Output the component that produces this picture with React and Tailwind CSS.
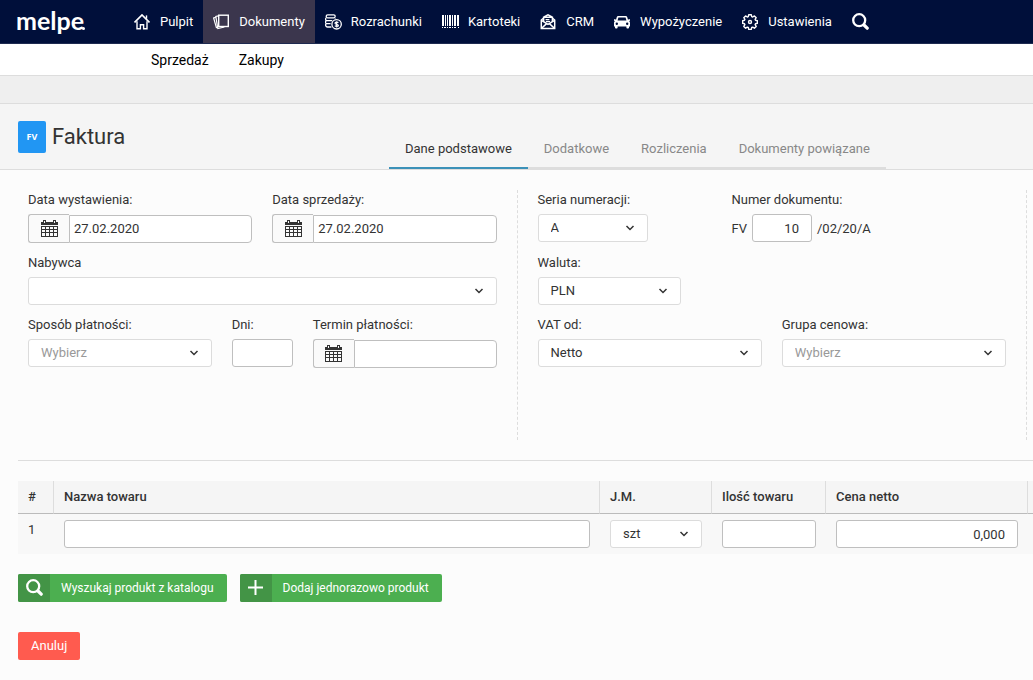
import { useState } from "react";

const HomeIcon = () => (
  <svg width="16" height="16" viewBox="0 0 16 16" fill="none" stroke="currentColor" strokeWidth="1.4" aria-hidden="true">
    <path d="M.5 8.4 8 1l7.5 7.400" strokeWidth="1.700" />
    <path d="M3 7.200v7.600h3.400v-4h3.200v4H13V7.200" />
    <path d="M12.500 1.400v3.400" />
  </svg>
);

const DocsIcon = () => (
  <svg width="16" height="16" viewBox="0 0 16 16" fill="none" stroke="currentColor" aria-hidden="true">
    <rect x="5.700" y="1.200" width="9.600" height="11.300" strokeWidth="1.400" />
    <path d="M5.400 1.800 2.800 2.400l2 12.200 6.600-1.600" strokeWidth="1.200" />
    <path d="M2.800 3.400.6 4l2.800 9.600 1.400-.2" strokeWidth="1.200" />
  </svg>
);

const CoinsIcon = () => (
  <svg width="17" height="16" viewBox="0 0 17 16" fill="none" stroke="currentColor" strokeWidth="1.300" aria-hidden="true" className="-mr-px">
    <rect x="1.200" y=".8" width="9" height="3" rx="1.500" />
    <path d="M10.200 5.200v-.6M1.400 3.800C0 4.600.4 6.500 1.800 6.700h5.400M1.200 6.800C0 7.800.4 9.500 1.800 9.700h3.800M1.200 9.800c-1.200 1-.4 3.200 1.200 3.200h4" />
    <circle cx="11.600" cy="10.300" r="4.700" />
    <path d="M13.400 8.700c-.7-.9-3.400-.8-3.400.5 0 1.400 3.400.8 3.400 2.200 0 1.300-2.700 1.300-3.500.3M11.700 7.200v6.200" strokeWidth="1.200" />
  </svg>
);

const BarcodeIcon = () => (
  <svg width="17" height="16" viewBox="0 0 17 16" fill="currentColor" aria-hidden="true" className="-mr-px">
    <path d="M0 1h2v11H0zM3 1h1v11H3zM5 1h1v11H5zM7 1h2v11H7zM10 1h1v11h-1zM12 1h2v11h-2zM15 1h2v11h-2z" />
    <path d="M0 13h1v1H0zM2 13h2v1H2zM5 13h1v1H5zM7 13h2v1H7zM10 13h1v1h-1zM12 13h2v1h-2zM16 13h1v1h-1z" />
  </svg>
);

const MailIcon = () => (
  <svg width="16" height="16" viewBox="0 0 16 16" fill="none" stroke="currentColor" strokeWidth="1.500" aria-hidden="true">
    <path d="M4 2.800 8 .8l4 2M3.600 8V3.200h8.800V8" />
    <path d="M3.400 4.200 1.300 6v8.400h13.400V6l-2.100-1.800" />
    <path d="m1.400 6.400 6.600 4 6.600-4M1.600 14.200l5-4.600M14.400 14.200l-5-4.600" />
    <path d="M5.600 5.700h3.800M5.900 7.700h4.200" strokeWidth="1.200" />
  </svg>
);

const CarIcon = () => (
  <svg width="16" height="16" viewBox="0 0 16 16" fill="currentColor" aria-hidden="true">
    <path
      fillRule="evenodd"
      d="M4.400 2h7.200c.8 0 1.400.4 1.600 1.100l.8 2.700.8-.5H16v1.500l-1 .3c.6.4 1 1 1 1.700v3.700h-1v1.200c0 .5-.4.800-.8.800h-1c-.4 0-.8-.3-.8-.8v-1.200H3.600v1.200c0 .5-.4.800-.8.800h-1c-.4 0-.8-.3-.8-.8v-1.200H0V8.800c0-.7.400-1.300 1-1.700l-1-.3V5.300h1.200l.8.5.8-2.700C3 2.400 3.600 2 4.400 2zM4.400 3.500l-.8 3.100h8.800l-.8-3.100zM2.800 8.500a1.200 1.200 0 1 0 0 2.400 1.200 1.200 0 0 0 0-2.400zM13.200 8.500a1.200 1.200 0 1 0 0 2.400 1.200 1.200 0 0 0 0-2.400z"
    />
  </svg>
);

const GearIcon = () => (
  <svg width="16" height="16" viewBox="0 0 16 16" fill="none" stroke="currentColor" strokeWidth="1.400" strokeLinejoin="round" aria-hidden="true">
    <path d="M6.700.7h2.600l.4 1.900 1 .4 1.700-1.100 1.800 1.800L13.100 5.300l.4 1 1.900.4v2.600l-1.900.4-.4 1 1.100 1.700-1.800 1.800-1.700-1.100-1 .4-.4 1.900H6.700l-.4-1.900-1-.4-1.700 1.100-1.800-1.800 1.100-1.700-.4-1L.6 9.300V6.700l1.900-.4.4-1L1.800 3.700l1.800-1.800L5.300 3l1-.4z" />
    <circle cx="8" cy="8" r="1.500" />
  </svg>
);

const SearchIcon = () => (
  <svg width="17" height="17" viewBox="0 0 17 17" fill="none" stroke="currentColor" aria-hidden="true">
    <circle cx="7.200" cy="7.200" r="6" strokeWidth="2.300" />
    <path d="m12 12 3.200 3.200" strokeWidth="3.200" strokeLinecap="round" />
  </svg>
);

const PlusIcon = () => (
  <svg width="15" height="15" viewBox="0 0 15 15" stroke="currentColor" strokeWidth="2" aria-hidden="true">
    <path d="M7.500 0v15M0 7.500h15" />
  </svg>
);

const CalendarIcon = () => (
  <svg width="17" height="17" viewBox="0 0 17 17" fill="currentColor" aria-hidden="true">
    <path d="M0 2h2V0h3v2h7V0h3v2h2v3H0z" />
    <path d="M3 1h1v2H3zM13 1h1v2h-1z" fill="#fafafa" />
    <path fillRule="evenodd" d="M0 6h17v11H0zM1 7v2h3V7zM5 7v2h3V7zM9 7v2h3V7zM13 7v2h3V7zM1 10v2h3v-2zM5 10v2h3v-2zM9 10v2h3v-2zM13 10v2h3v-2zM1 13v3h3v-3zM5 13v3h3v-3zM9 13v3h3v-3zM13 13v3h3v-3z" />
  </svg>
);

const navItems = [
  { label: "Pulpit", icon: HomeIcon },
  { label: "Dokumenty", icon: DocsIcon, active: true },
  { label: "Rozrachunki", icon: CoinsIcon },
  { label: "Kartoteki", icon: BarcodeIcon },
  { label: "CRM", icon: MailIcon },
  { label: "Wypożyczenie", icon: CarIcon },
  { label: "Ustawienia", icon: GearIcon },
];

const tabs = ["Dane podstawowe", "Dodatkowe", "Rozliczenia", "Dokumenty powiązane"];

const inputClass = "h-7 w-full rounded-[3px] border border-[#bfbfbf] bg-white px-3";

const Label = ({ id, children }) => (
  <label htmlFor={id} className="mb-1 block leading-5 whitespace-nowrap">
    {children}
  </label>
);

const Select = ({ id, options, placeholder, label }) => (
  <div className="relative">
    <select
      id={id}
      aria-label={label}
      className={`block h-7 w-full appearance-none rounded-[3px] border border-[#dcdcdc] bg-white pr-8 pl-3 ${
        placeholder ? "text-[#999]" : "text-[#333]"
      }`}
    >
      {options.map((option) => (
        <option key={option}>{option}</option>
      ))}
    </select>
    <svg
      className="pointer-events-none absolute top-1/2 right-[13px] -translate-y-1/2"
      width="10"
      height="6"
      viewBox="0 0 10 6"
      fill="none"
      stroke="#333"
      strokeWidth="1.5"
      aria-hidden="true"
    >
      <path d="m1.500 1 3.500 3.500L8.500 1" />
    </svg>
  </div>
);

const DateField = ({ id, label, value = "" }) => (
  <div>
    <Label id={id}>{label}</Label>
    <div className="flex items-end">
      <button
        type="button"
        aria-label="Kalendarz"
        className="flex h-[29px] w-[41px] shrink-0 items-center justify-center rounded-l-[3px] border border-r-0 border-[#bfbfbf] bg-[#fafafa]"
      >
        <CalendarIcon />
      </button>
      <input
        id={id}
        defaultValue={value}
        className="h-7 w-full min-w-0 rounded-r border border-[#bfbfbf] bg-white px-1 pb-0.5"
      />
    </div>
  </div>
);

const ActionButton = ({ icon: Icon, children }) => (
  <button type="button" className="flex h-7 items-center overflow-hidden rounded-xs bg-[#4caf50] text-xs text-white">
    <span className="flex h-full w-8 items-center justify-center bg-[#439446] pb-0.5">
      <Icon />
    </span>
    <span className="pr-[13px] pl-[11px]">{children}</span>
  </button>
);

const App = () => {
  const [activeTab, setActiveTab] = useState(tabs[0]);

  return (
    <div className="min-h-screen overflow-x-hidden bg-[#fcfcfc] font-['Roboto',sans-serif] text-[13px] text-[#333]">
      {/* Top bar */}
      <header className="flex h-11 items-stretch border-b border-[#1e2a50] bg-[#000f3a] text-white">
        <a href="#" className="flex w-31 shrink-0 items-baseline pt-1 pl-4 font-['Lato',sans-serif] text-[25px] leading-8 font-bold">
          melpe
          <span className="-ml-0.5 size-[3px] rounded-full bg-white" />
        </a>
        <nav className="flex">
          {navItems.map(({ label, icon: Icon, active }) => (
            <a
              key={label}
              href="#"
              className={`flex items-center gap-2.5 px-2.5 whitespace-nowrap ${active ? "bg-[#3b364d]" : ""}`}
            >
              <Icon />
              {label}
            </a>
          ))}
        </nav>
        <button type="button" aria-label="Szukaj" className="px-2.5">
          <SearchIcon />
        </button>
      </header>

      {/* Submenu */}
      <nav className="flex h-8 items-center gap-[30px] border-b border-[#ddd] bg-white pl-[151px] text-sm text-black">
        <a href="#">Sprzedaż</a>
        <a href="#">Zakupy</a>
      </nav>
      <div className="h-7 border-b border-[#ddd] bg-[#efefef]" />

      {/* Title and tabs */}
      <div className="flex h-[66px] border-b border-[#ddd] bg-[#f5f5f5] pl-[18px]">
        <div className="flex w-[371px] shrink-0 items-center gap-1.5">
          <span className="flex h-8 w-7 items-center justify-center rounded-xs bg-[#2196f3] font-['Open_Sans',sans-serif] text-[9px] font-bold text-white">
            FV
          </span>
          <h1 className="text-[22px] leading-8">Faktura</h1>
        </div>
        <div role="tablist" className="flex self-end border-b-2 border-[#ddd]">
          {tabs.map((tab) => (
            <button
              key={tab}
              type="button"
              role="tab"
              aria-selected={activeTab === tab}
              onClick={() => setActiveTab(tab)}
              className={`-mb-0.5 h-[38px] border-b-2 px-4 whitespace-nowrap ${
                activeTab === tab ? "border-[#3c91b8] text-[#333]" : "border-transparent text-[#888]"
              }`}
            >
              {tab}
            </button>
          ))}
        </div>
      </div>

      {/* Document details */}
      <form className="mt-5 grid grid-cols-2 pr-1.5 pl-2">
        <div className="flex min-h-[250px] flex-col gap-2.5 border-r border-dashed border-[#ddd] px-5">
          <div className="grid grid-cols-2 gap-5">
            <DateField id="issued" label="Data wystawienia:" value="27.02.2020" />
            <DateField id="sold" label="Data sprzedaży:" value="27.02.2020" />
          </div>
          <div>
            <Label id="buyer">Nabywca</Label>
            <Select id="buyer" options={[""]} />
          </div>
          <div className="grid grid-cols-[3fr_1fr_3fr] gap-5">
            <div>
              <Label id="payment">Sposób płatności:</Label>
              <Select id="payment" options={["Wybierz"]} placeholder />
            </div>
            <div>
              <Label id="days">Dni:</Label>
              <input id="days" className={inputClass} />
            </div>
            <DateField id="due" label="Termin płatności:" />
          </div>
        </div>

        <div className="flex flex-col gap-2.5 border-r border-dashed border-[#ddd] px-5">
          <div className="flex">
            <div className="w-[194px]">
              <Label id="series">Seria numeracji:</Label>
              <div className="w-[110px]">
                <Select id="series" options={["A"]} />
              </div>
            </div>
            <div>
              <Label id="number">Numer dokumentu:</Label>
              <div className="flex h-[29px] items-center gap-[5px]">
                FV
                <span className="h-full w-[60px]">
                  <input id="number" defaultValue="10" className={`${inputClass} text-right`} />
                </span>
                /02/20/A
              </div>
            </div>
          </div>
          <div className="w-[143px]">
            <Label id="currency">Waluta:</Label>
            <Select id="currency" options={["PLN"]} />
          </div>
          <div className="grid grid-cols-2 gap-5">
            <div>
              <Label id="vat">VAT od:</Label>
              <Select id="vat" options={["Netto"]} />
            </div>
            <div>
              <Label id="group">Grupa cenowa:</Label>
              <Select id="group" options={["Wybierz"]} placeholder />
            </div>
          </div>
        </div>
      </form>

      {/* Line items */}
      <section className="mt-5 ml-[18px] border-t border-[#ddd] pt-5">
        <table className="w-full table-fixed border-separate border-spacing-0 text-left">
          <colgroup>
            <col className="w-9" />
            <col />
            <col className="w-28" />
            <col className="w-[114px]" />
            <col className="w-[202px]" />
            <col className="w-[5px]" />
          </colgroup>
          <thead>
            <tr className="h-[33px] bg-[#f5f5f5]">
              {["#", "Nazwa towaru", "J.M.", "Ilość towaru", "Cena netto"].map((name) => (
                <th key={name} className="border-r border-b border-r-[#ddd] border-b-[#bbb] px-2.5 font-medium">
                  {name}
                </th>
              ))}
              <td className="border-b border-[#bbb]" />
            </tr>
          </thead>
          <tbody>
            <tr className="h-10 bg-[#f8f8f8] align-top">
              <td className="px-2.5 pt-1.5 leading-5">1</td>
              <td className="px-2.5 pt-1.5">
                <input aria-label="Nazwa towaru" className={inputClass} />
              </td>
              <td className="px-2.5 pt-1.5">
                <Select label="J.M." options={["szt"]} />
              </td>
              <td className="px-2.5 pt-1.5">
                <input aria-label="Ilość towaru" className={inputClass} />
              </td>
              <td className="px-2.5 pt-1.5">
                <input aria-label="Cena netto" defaultValue="0,000" className={`${inputClass} text-right`} />
              </td>
              <td />
            </tr>
          </tbody>
        </table>

        <div className="mt-5 flex gap-[13px]">
          <ActionButton icon={SearchIcon}>Wyszukaj produkt z katalogu</ActionButton>
          <ActionButton icon={PlusIcon}>Dodaj jednorazowo produkt</ActionButton>
        </div>

        <button type="button" className="mt-[30px] h-7 rounded-xs bg-[#ff5b4f] px-[13px] text-white">
          Anuluj
        </button>
      </section>
    </div>
  );
};

export default App;
